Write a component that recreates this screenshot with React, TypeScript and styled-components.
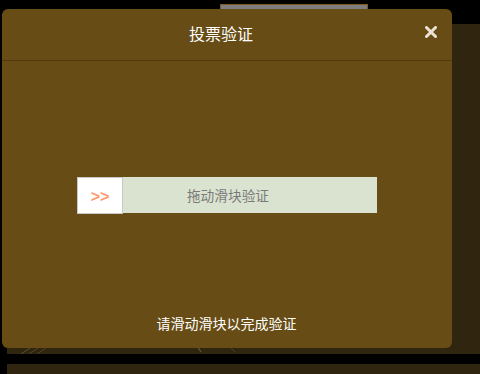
import React from 'react';
import styled, { createGlobalStyle } from 'styled-components';

const GlobalStyle = createGlobalStyle`
  html, body {
    margin: 0;
    padding: 0;
    background: #000;
    font-family: "Noto Sans CJK SC", "Noto Sans", sans-serif;
  }
`;

const Page = styled.div`
  position: relative;
  width: 480px;
  height: 374px;
  overflow: hidden;
  background: #000;
`;

const TopStrip = styled.div`
  height: 24px;
  display: flex;
  align-items: flex-start;
  padding-top: 4px;
  padding-left: 220px;
  box-sizing: border-box;
`;

const GreyBar = styled.div`
  width: 148px;
  height: 6px;
  box-sizing: border-box;
  background: #7d7d7d;
  border: 1px solid #7a5c1e;
  border-bottom: none;
`;

const BackPanel = styled.div<{ $h: number }>`
  margin-left: 7px;
  height: ${({ $h }) => $h}px;
  background: #30250e;
  position: relative;
  overflow: hidden;
`;

const Gap = styled.div`
  height: 10px;
`;

const Streaks = styled.svg`
  position: absolute;
  left: 0;
  bottom: 0;
`;

const Modal = styled.div`
  position: absolute;
  left: 2px;
  top: 9px;
  width: 450px;
  height: 339px;
  background: #674d15;
  border-radius: 6px;
  display: flex;
  flex-direction: column;
`;

const Header = styled.div`
  height: 52px;
  box-sizing: border-box;
  border-bottom: 1px solid #513c10;
  display: flex;
  align-items: center;
  justify-content: center;
  padding: 0 12px 3px 0;
  position: relative;
`;

const Title = styled.h3`
  margin: 0;
  font-size: 16px;
  font-weight: 400;
  color: #fff;
  line-height: 20px;
`;

const CloseButton = styled.button`
  position: absolute;
  right: 15px;
  top: 17px;
  width: 12px;
  height: 12px;
  padding: 0;
  border: none;
  background: transparent;
  display: flex;
  cursor: pointer;
`;

const Body = styled.div`
  flex: 1;
  display: flex;
  flex-direction: column;
  align-items: center;
  padding-top: 116px;
`;

const Slider = styled.div`
  width: 300px;
  height: 36px;
  background: #dae3d0;
  position: relative;
  display: flex;
  align-items: center;
  justify-content: center;
`;

const Handle = styled.div`
  position: absolute;
  left: 0;
  top: 0;
  width: 46px;
  height: 37px;
  box-sizing: border-box;
  background: #fff;
  border: 1px solid #c8c8c8;
  display: flex;
  align-items: center;
  justify-content: center;
  color: #ff9a6e;
  font-family: "Liberation Sans", Arial, sans-serif;
  font-size: 16px;
  font-weight: 700;
  padding-top: 2px;
`;

const SliderText = styled.span`
  font-size: 13.7px;
  color: #7a7a7a;
  line-height: 20px;
  margin-left: 2px;
`;

const Footer = styled.div`
  margin-top: auto;
  padding-bottom: 15px;
  text-align: center;
  color: #fff;
  font-size: 14px;
  line-height: 20px;
  padding-right: 1px;
`;

export default function App() {
  return (
    <Page>
      <GlobalStyle />
      <TopStrip>
        <GreyBar />
      </TopStrip>
      <BackPanel $h={330}>
        <Streaks width="260" height="8" viewBox="0 0 260 8">
          <line x1="14" y1="8" x2="26" y2="0" stroke="#8a7a55" strokeWidth="1" opacity="0.5" />
          <line x1="22" y1="8" x2="34" y2="0" stroke="#8a7a55" strokeWidth="1" opacity="0.4" />
          <line x1="30" y1="8" x2="42" y2="0" stroke="#8a7a55" strokeWidth="1" opacity="0.35" />
          <line x1="194" y1="6" x2="190" y2="0" stroke="#9a8a60" strokeWidth="1.2" opacity="0.5" />
          <line x1="228" y1="6" x2="222" y2="0" stroke="#7a6a45" strokeWidth="1" opacity="0.4" />
        </Streaks>
      </BackPanel>
      <Gap />
      <BackPanel $h={10} />
      <Modal>
        <Header>
          <Title>投票验证</Title>
          <CloseButton aria-label="关闭">
            <svg width="12" height="12" viewBox="0 0 12 12">
              <path d="M1.5 1.5 L10.5 10.5 M10.5 1.5 L1.5 10.5" stroke="#ebe4d6" strokeWidth="3" strokeLinecap="round" />
            </svg>
          </CloseButton>
        </Header>
        <Body>
          <Slider>
            <Handle>&gt;&gt;</Handle>
            <SliderText>拖动滑块验证</SliderText>
          </Slider>
        </Body>
        <Footer>请滑动滑块以完成验证</Footer>
      </Modal>
    </Page>
  );
}
